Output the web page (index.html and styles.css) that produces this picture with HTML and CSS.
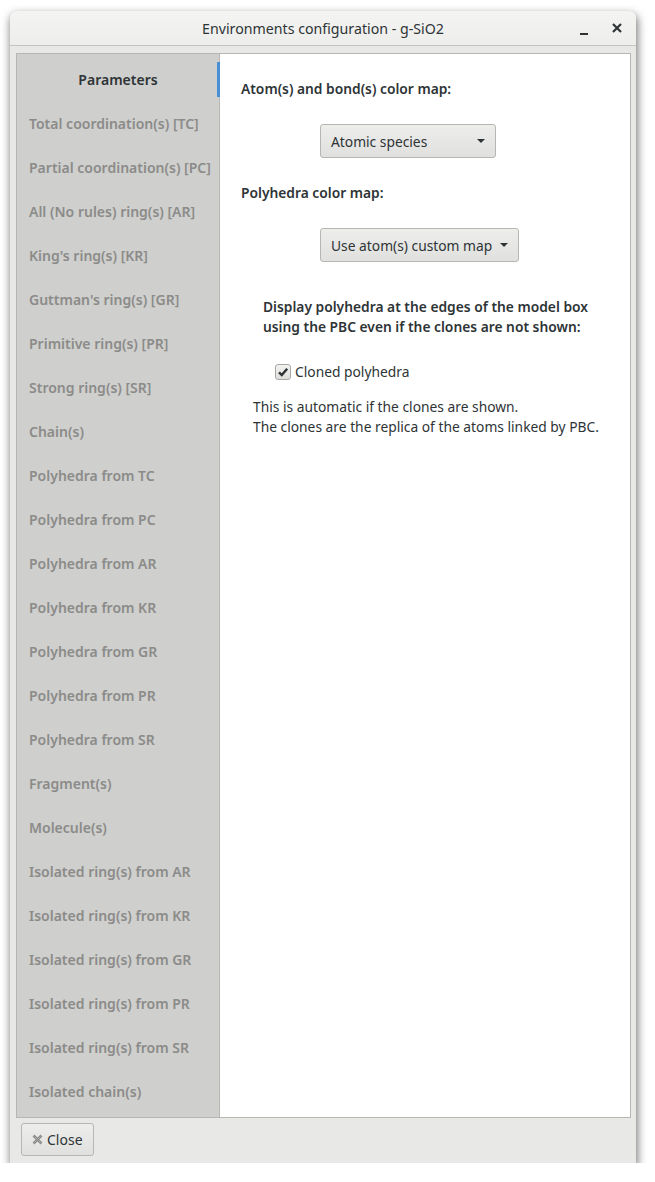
FILE: index.html
```html
<!DOCTYPE html>
<html>
<head>
<meta charset="utf-8">
<link rel="stylesheet" href="styles.css">
</head>
<body>
<div class="window">
  <div class="titlebar">
    <div class="title">Environments configuration - g-SiO2</div>
    <div class="controls">
      <span class="ctl-min"></span>
      <svg class="ctl-close" width="10" height="10" viewBox="0 0 10 10"><path d="M1 1 L9 9 M9 1 L1 9" stroke="#2e3436" stroke-width="2.2" fill="none"/></svg>
    </div>
  </div>
  <div class="body">
    <div class="notebook">
      <div class="sidebar">
        <div class="tab active">Parameters</div>
        <div class="tab">Total coordination(s) [TC]</div>
        <div class="tab">Partial coordination(s) [PC]</div>
        <div class="tab">All (No rules) ring(s) [AR]</div>
        <div class="tab">King's ring(s) [KR]</div>
        <div class="tab">Guttman's ring(s) [GR]</div>
        <div class="tab">Primitive ring(s) [PR]</div>
        <div class="tab">Strong ring(s) [SR]</div>
        <div class="tab">Chain(s)</div>
        <div class="tab">Polyhedra from TC</div>
        <div class="tab">Polyhedra from PC</div>
        <div class="tab">Polyhedra from AR</div>
        <div class="tab">Polyhedra from KR</div>
        <div class="tab">Polyhedra from GR</div>
        <div class="tab">Polyhedra from PR</div>
        <div class="tab">Polyhedra from SR</div>
        <div class="tab">Fragment(s)</div>
        <div class="tab">Molecule(s)</div>
        <div class="tab">Isolated ring(s) from AR</div>
        <div class="tab">Isolated ring(s) from KR</div>
        <div class="tab">Isolated ring(s) from GR</div>
        <div class="tab">Isolated ring(s) from PR</div>
        <div class="tab">Isolated ring(s) from SR</div>
        <div class="tab">Isolated chain(s)</div>
      </div>
      <div class="page">
        <div class="heading h1">Atom(s) and bond(s) color map:</div>
        <div class="combo-row">
          <div class="combo combo1"><span>Atomic species</span><span class="arrow"></span></div>
        </div>
        <div class="heading h2">Polyhedra color map:</div>
        <div class="combo-row">
          <div class="combo combo2"><span>Use atom(s) custom map</span><span class="arrow"></span></div>
        </div>
        <div class="heading h3">Display polyhedra at the edges of the model box<br>using the PBC even if the clones are not shown:</div>
        <div class="check-row">
          <span class="checkbox"><svg width="12" height="12" viewBox="0 0 12 12"><path d="M2 6.3 L4.8 9.1 L10.2 2.8" stroke="#2e3436" stroke-width="2.4" fill="none"/></svg></span>
          <span>Cloned polyhedra</span>
        </div>
        <div class="note">This is automatic if the clones are shown.<br>The clones are the replica of the atoms linked by PBC.</div>
      </div>
    </div>
    <div class="actions">
      <div class="button">
        <svg class="close-icon" width="11" height="11" viewBox="0 0 11 11"><path d="M1.5 1.5 L9.5 9.5 M9.5 1.5 L1.5 9.5" stroke="#8a8a88" stroke-width="2.6" fill="none"/><path d="M1.5 1.5 L9.5 9.5 M9.5 1.5 L1.5 9.5" stroke="#d0d0ce" stroke-width="0.8" stroke-dasharray="1 1" fill="none"/></svg>
        <span>Close</span>
      </div>
    </div>
  </div>
</div>
</body>
</html>
```

FILE: styles.css
```css
html, body {
  margin: 0;
  padding: 0;
  background: #ffffff;
}
body {
  font-family: "Noto Sans", "DejaVu Sans", sans-serif;
  font-size: 14px;
  color: #2e3436;
}
.window {
  margin: 11px 0 0 10px;
  width: 626px;
  height: 1152px;
  border-radius: 7px 7px 0 0;
  box-shadow: 1px 4px 9px 1px rgba(0,0,0,0.5);
  display: flex;
  flex-direction: column;
  background: #e8e8e7;
  overflow: hidden;
}
.titlebar {
  height: 34px;
  flex: none;
  background: linear-gradient(#f4f4f3, #ededec);
  border-bottom: 1px solid #c3c3c0;
  display: flex;
  align-items: center;
  justify-content: center;
  position: relative;
}
.title {
  font-size: 14.2px;
  color: #2e3436;
  padding-top: 1px;
}
.controls {
  position: absolute;
  right: 14px;
  top: 0;
  height: 34px;
  display: flex;
  align-items: center;
  gap: 24px;
}
.ctl-min {
  width: 8px;
  height: 2px;
  background: #2e3436;
  margin-top: 11px;
}
.ctl-close { display: block; }
.body {
  flex: 1;
  display: flex;
  flex-direction: column;
  padding: 7px 5px 6px 6px;
}
.notebook {
  height: 1063px;
  border: 1px solid #b6b6b3;
  display: flex;
  background: #ffffff;
}
.sidebar {
  width: 203px;
  flex: none;
  background: #cfcfcd;
  border-right: 1px solid #b6b6b3;
  padding-top: 4px;
  box-sizing: border-box;
}
.tab {
  height: 44px;
  line-height: 44px;
  padding-left: 12px;
  color: #8b8b89;
  white-space: nowrap;
  font-weight: 600;
  font-size: 14px;
}
.tab.active {
  color: #2e3436;
  text-align: center;
  padding-left: 0;
  position: relative;
}
.tab.active::after {
  content: "";
  position: absolute;
  right: -1px;
  top: 4px;
  width: 3px;
  height: 35px;
  background: #4a90d9;
}
.page {
  flex: 1;
  padding: 25px 0 0 21px;
  font-size: 13.8px;
  line-height: 19px;
}
.heading {
  font-weight: 600;
}
.combo-row {
  padding-left: 79px;
}
.combo {
  display: inline-flex;
  align-items: center;
  justify-content: space-between;
  height: 34px;
  box-sizing: border-box;
  border: 1px solid #b6b6b3;
  border-radius: 3px;
  background: linear-gradient(#ededec, #e0e0de);
  padding: 0 10px;
  color: #2e3436;
}
.combo1 { width: 176px; margin-top: 26px; }
.combo2 { width: 199px; margin-top: 26px; }
.h2 { margin-top: 25px; }
.arrow {
  width: 0;
  height: 0;
  border-left: 4px solid transparent;
  border-right: 4px solid transparent;
  border-top: 4px solid #2e3436;
  margin-left: 4px;
}
.h3 {
  margin-top: 35px;
  padding-left: 22px;
  line-height: 20px;
}
.check-row {
  display: flex;
  align-items: center;
  margin-top: 25px;
  padding-left: 34px;
  gap: 4px;
}
.checkbox {
  width: 16px;
  height: 16px;
  box-sizing: border-box;
  border: 1px solid #a8a8a5;
  border-radius: 3px;
  background: linear-gradient(#f2f2f1, #dededc);
  display: flex;
  align-items: center;
  justify-content: center;
}
.checkbox svg { display: block; }
.note {
  margin-top: 16px;
  padding-left: 12px;
  line-height: 20px;
}
.actions {
  padding-top: 5px;
  display: flex;
}
.button {
  margin-left: 5px;
  height: 33px;
  box-sizing: border-box;
  border: 1px solid #b6b6b3;
  border-radius: 3px;
  background: linear-gradient(#ededec, #e0e0de);
  display: flex;
  align-items: center;
  padding: 0 10px 0 10px;
  gap: 4px;
}
.close-icon { display: block; }
```
